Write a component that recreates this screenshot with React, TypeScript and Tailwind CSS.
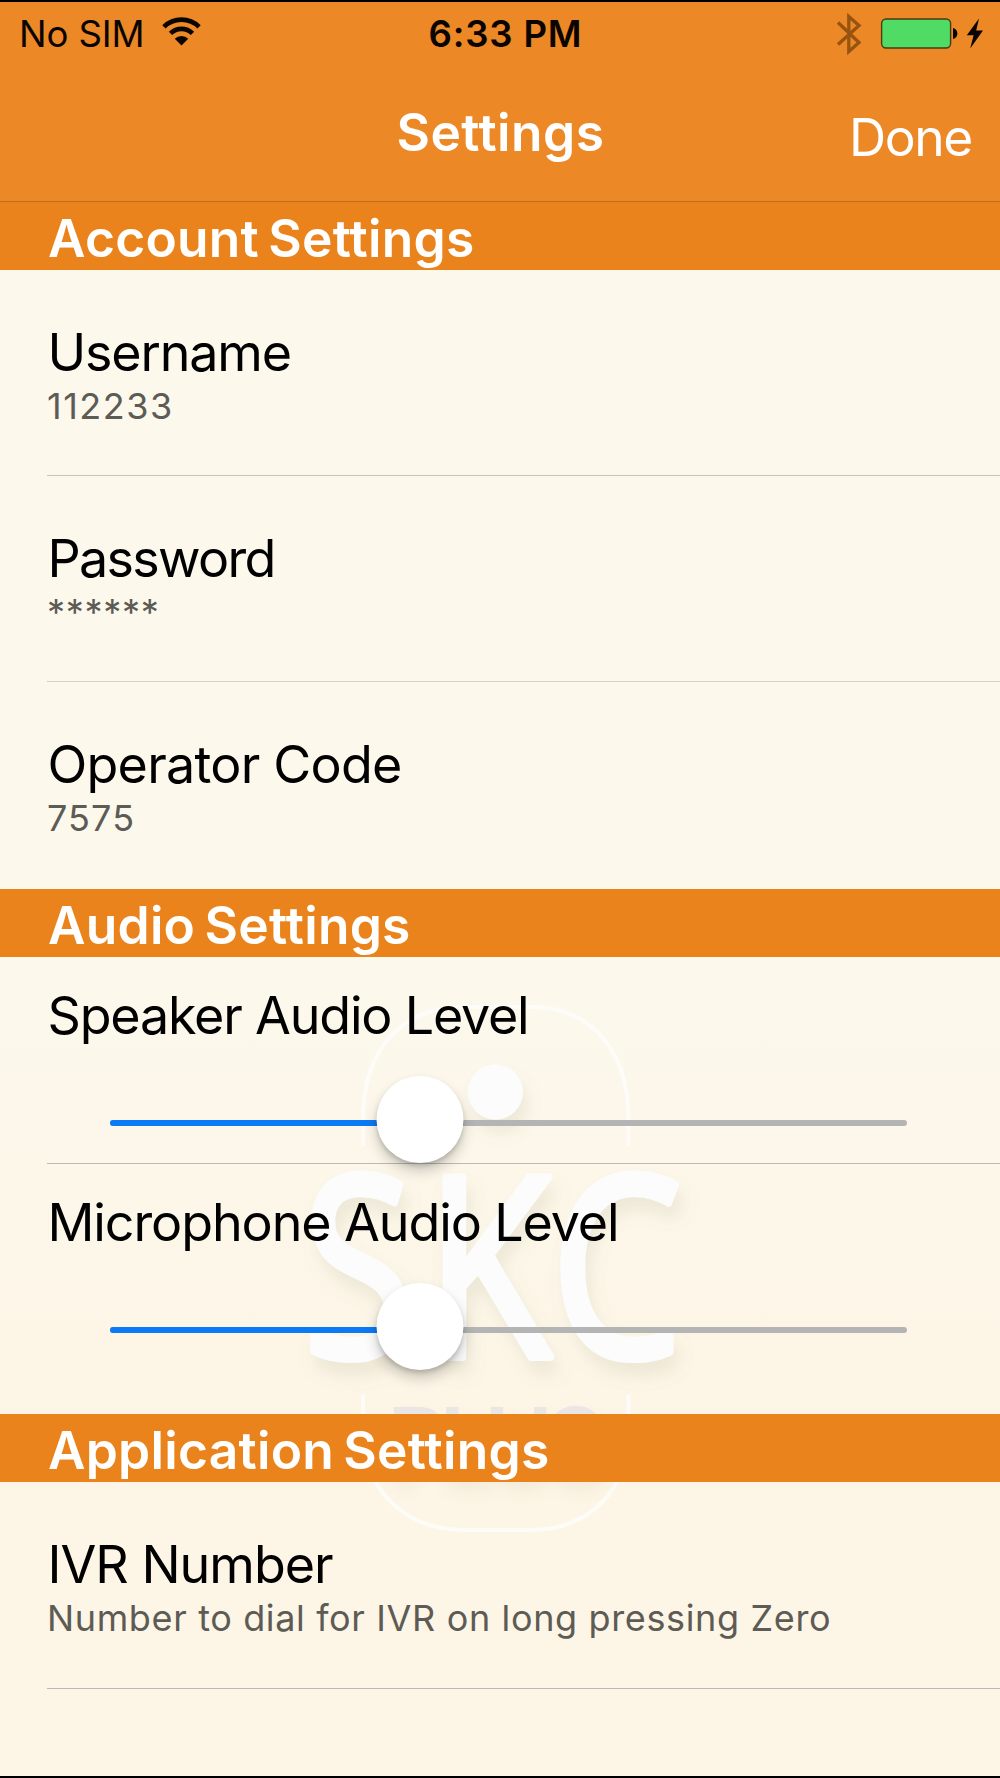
import React, { useState } from "react";

const accountRows = [
  { title: "Username", detail: "112233", titleCls: "tracking-[-1.15px]", detailCls: "tracking-[1.5px]" },
  { title: "Password", detail: "******", titleCls: "tracking-[-1.7px]", detailCls: "tracking-[0.7px]" },
  { title: "Operator Code", detail: "7575", titleCls: "tracking-[-0.75px]", detailCls: "tracking-[1.1px]" },
];

const WifiIcon = () => (
  <svg className="ml-[17px] mt-[-5px] h-[29px] w-[39px]" viewBox="0 0 40 30">
    <g fill="none" stroke="#0a0500" strokeWidth="4.8">
      <path d="M1.8 10.2 A26 26 0 0 1 38.2 10.2" />
      <path d="M8.6 17 A16.2 16.2 0 0 1 31.4 17" />
    </g>
    <path d="M20 29.5 L13 22.6 A10 10 0 0 1 27 22.6 Z" fill="#0a0500" />
  </svg>
);

const BluetoothIcon = () => (
  <svg className="h-[44px] w-[26px]" viewBox="0 0 26 44">
    <path
      d="M2 10.5 L23 30.5 L12.8 39.5 V4.5 L23 13.5 L2 32.5"
      fill="none"
      stroke="#965410"
      strokeWidth="3.3"
    />
  </svg>
);

const BatteryIcon = () => (
  <svg className="ml-[18px] h-[31px] w-[78px]" viewBox="0 0 78 31">
    <rect x="1.6" y="1" width="69" height="29" rx="4.5" fill="#4fdb64" stroke="#4a3a10" strokeWidth="1.4" />
    <path d="M73 10 C78.8 11 78.8 20 73 21 Z" fill="#0a0500" />
  </svg>
);

const BoltIcon = () => (
  <svg className="ml-[8px] h-[31px] w-[18px]" viewBox="0 0 18 31">
    <path d="M13 0.5 L0.8 17.3 H7.6 L4.2 30.5 L17 12.6 H10.2 Z" fill="#0a0500" />
  </svg>
);

const StatusBar = () => (
  <div className="grid h-[64px] grid-cols-3 items-center text-[36.6px] text-[#0a0500]">
    <div className="flex items-center pl-[19px]">
      <span className="leading-[44px] tracking-[-0.1px]">No SIM</span>
      <WifiIcon />
    </div>
    <span className="pl-[11px] text-center font-semibold leading-[44px] tracking-[0.8px]">
      6:33 PM
    </span>
    <div className="flex items-center justify-end pb-px pr-[16px]">
      <BluetoothIcon />
      <BatteryIcon />
      <BoltIcon />
    </div>
  </div>
);

const NavBar = ({ onDone }: any) => (
  <div className="grid h-[135px] grid-cols-3 items-start text-white">
    <span />
    <h1 className="pl-px pt-[36px] text-center text-[51.5px] font-semibold leading-[60px] tracking-[0.5px]">
      Settings
    </h1>
    <button
      onClick={onDone}
      className="justify-self-end pr-[28px] pt-[41px] text-[51.5px] leading-[60px] tracking-[-1.4px]"
    >
      Done
    </button>
  </div>
);

const SectionHeader = ({ children }: any) => (
  <h2 className="h-[68px] bg-[#ea8116]/98 pl-[48px] pt-[5px] text-[51.5px] font-semibold leading-[63px] tracking-[0.25px] text-white [word-spacing:-4px]">
    {children}
  </h2>
);

const SettingRow = ({ title, detail, titleCls, detailCls }: any) => (
  <div className="pl-[47px]">
    <div className="h-[205px] pt-[53px]">
      <p className={`pl-[0.5px] text-[52px] leading-[60px] text-black ${titleCls}`}>{title}</p>
      <p className={`pt-px text-[36px] leading-[44px] text-[#5d5b56] ${detailCls}`}>{detail}</p>
    </div>
  </div>
);

const Divider = ({ className = "bg-[#c6c4c2]" }: any) => (
  <div className={`ml-[47px] h-px ${className}`} />
);

const SliderRow = ({ title, titleCls, value }: any) => (
  <div className="h-[206px] pl-[47.5px] pt-[29px]">
    <p className={`text-[52px] leading-[60px] text-black ${titleCls}`}>{title}</p>
    <div className="relative ml-[62px] mt-[74px] h-[6px] w-[797px] rounded-full bg-[#b4b4b4]">
      <div className="h-full rounded-full bg-[#0a7af5]" style={{ width: `${value}%` }} />
      <div
        className="absolute top-[-44px] size-[87px] -translate-x-1/2 rounded-full bg-white shadow-[0_8px_14px_rgba(0,0,0,0.2),0_3px_4px_rgba(0,0,0,0.14)]"
        style={{ left: `${value}%` }}
      />
    </div>
  </div>
);

// Faded app logo that sits behind the table
const Watermark = () => (
  <svg className="absolute left-[280px] top-[978px] -z-10 h-[580px] w-[440px]" viewBox="280 980 440 580">
    <defs>
      <filter id="soft" x="-20%" y="-20%" width="140%" height="150%">
        <feDropShadow dx="5" dy="13" stdDeviation="8" floodColor="#8a8460" floodOpacity="0.13" />
      </filter>
    </defs>
    <g fill="none" stroke="#fdfcf9" strokeWidth="4">
      <path d="M363 1146 V1120 C363 1050 400 1007 465 1007 H530 C592 1007 628.5 1050 628.5 1120 V1146" />
      <path d="M363 1395 V1430 C363 1490 405 1530 465 1530 H530 C590 1530 628.5 1490 628.5 1430 V1395" />
    </g>
    <g fill="#fcfcfc" filter="url(#soft)">
      <circle cx="495.5" cy="1092" r="27.5" />
      <g fontFamily="Open Sans" fontSize="252" stroke="#fcfcfc" strokeWidth="8" strokeLinejoin="round">
        <text x="303" y="1357" textLength="110" lengthAdjust="spacingAndGlyphs">S</text>
        <text x="426" y="1357" textLength="125" lengthAdjust="spacingAndGlyphs">K</text>
        <text x="551" y="1357" textLength="131" lengthAdjust="spacingAndGlyphs">C</text>
      </g>
    </g>
    <text
      x="387"
      y="1475"
      fill="#e9e6e6"
      fontFamily="Inter"
      fontSize="94"
      fontWeight="600"
      textLength="219"
      filter="url(#soft)"
    >
      PLUS
    </text>
  </svg>
);

function App() {
  const [open, setOpen] = useState(true);

  return (
    <div className="relative isolate flex h-[1778px] w-[1000px] flex-col overflow-hidden border-y-2 border-black bg-linear-to-b from-[#fcf8ec] from-55% to-[#fdf5e5] to-85% font-['Inter',sans-serif]">
      <Watermark />
      <header className="border-b border-[#bd6c20] bg-[#ec8826]">
        <StatusBar />
        <NavBar onDone={() => setOpen(!open)} />
      </header>

      <SectionHeader>Account Settings</SectionHeader>
      <SettingRow {...accountRows[0]} />
      <Divider />
      <SettingRow {...accountRows[1]} />
      <Divider className="bg-[#d3d1ce]" />
      <SettingRow {...accountRows[2]} />
      <div className="h-[2px]" />

      <SectionHeader>Audio Settings</SectionHeader>
      <SliderRow title="Speaker Audio Level" titleCls="tracking-[-1.2px]" value={38.9} />
      <Divider className="bg-[#bcbab8]" />
      <SliderRow title="Microphone Audio Level" titleCls="tracking-[-1.1px]" value={38.9} />
      <div className="h-[44px]" />

      <SectionHeader>Application Settings</SectionHeader>
      <SettingRow
        title="IVR Number"
        detail="Number to dial for IVR on long pressing Zero"
        titleCls="tracking-[-1px]"
        detailCls="tracking-[0.64px]"
      />
      <Divider className="mt-px bg-[#bcbab8]" />
    </div>
  );
}

export default App;
